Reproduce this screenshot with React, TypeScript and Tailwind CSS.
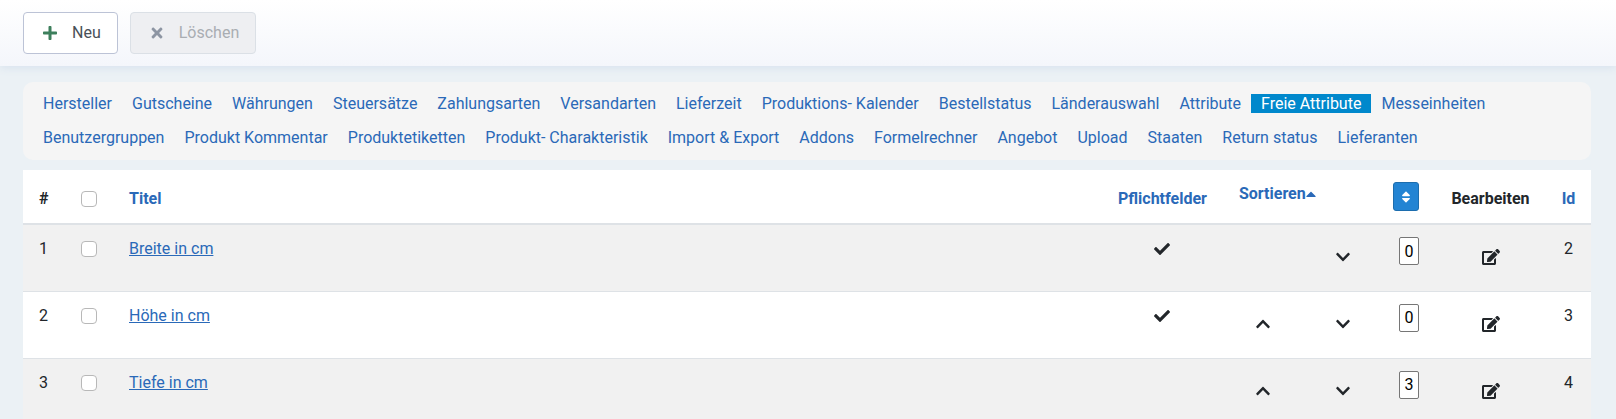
import { FaCaretUp, FaCheck, FaChevronDown, FaChevronUp, FaEdit, FaPlus, FaSort, FaTimes } from 'react-icons/fa'

type Attribute = {
  id: number
  title: string
  required: boolean
  ordering: number
}

const menu = [
  'Hersteller',
  'Gutscheine',
  'Währungen',
  'Steuersätze',
  'Zahlungsarten',
  'Versandarten',
  'Lieferzeit',
  'Produktions- Kalender',
  'Bestellstatus',
  'Länderauswahl',
  'Attribute',
  'Freie Attribute',
  'Messeinheiten',
  'Benutzergruppen',
  'Produkt Kommentar',
  'Produktetiketten',
  'Produkt- Charakteristik',
  'Import & Export',
  'Addons',
  'Formelrechner',
  'Angebot',
  'Upload',
  'Staaten',
  'Return status',
  'Lieferanten',
]

const active = 'Freie Attribute'

const attributes: Attribute[] = [
  { id: 2, title: 'Breite in cm', required: true, ordering: 0 },
  { id: 3, title: 'Höhe in cm', required: true, ordering: 0 },
  { id: 4, title: 'Tiefe in cm', required: false, ordering: 3 },
]

const checkbox = 'block size-4 appearance-none rounded border border-[#b8b8b8] bg-white checked:bg-[#2384d3]'

function Toolbar() {
  return (
    <header className="flex gap-3 bg-linear-to-b from-white to-[#f4f6fb] px-[23px] py-3 shadow-[0_2px_8px_#d8e2ee]">
      <button className="flex h-[42px] items-center rounded border border-[#bcc3d6] bg-white px-4 text-[#495057]">
        <FaPlus className="mr-3 w-5 text-[#3d7f5c]" />
        Neu
      </button>
      <button
        disabled
        className="flex h-[42px] items-center rounded border border-[#dbe0e6] bg-[#eeeff2] px-4 text-[#a9adb2]"
      >
        <FaTimes className="mr-3 w-5 text-[#8d95a3]" />
        Löschen
      </button>
    </header>
  )
}

function Menu() {
  return (
    <nav className="rounded-[10px] bg-[#f5f5f5] p-[5px]">
      <ul className="flex flex-wrap px-[5px]">
        {menu.map(item => (
          <li key={item} className="leading-[34px]">
            <a
              href="#"
              className={item === active ? 'bg-[#0088cc] px-[10px] text-white' : 'px-[10px] text-[#2a69b8]'}
            >
              {item}
            </a>
          </li>
        ))}
      </ul>
    </nav>
  )
}

function AttributeTable() {
  return (
    <table className="mt-[10px] w-full table-fixed border-collapse bg-white text-left">
      <colgroup>
        <col className="w-[42px]" />
        <col className="w-12" />
        <col />
        <col className="w-[121px]" />
        <col className="w-20" />
        <col className="w-20" />
        <col className="w-[52px]" />
        <col className="w-[111px]" />
        <col className="w-[45px]" />
      </colgroup>
      <thead>
        <tr className="h-[54px] border-b-2 border-[#dee2e6] align-bottom">
          <th className="pb-3 pl-4">#</th>
          <th className="px-4 pb-4">
            <input type="checkbox" aria-label="Alle auswählen" className={checkbox} />
          </th>
          <th className="px-4 pb-3">
            <a href="#" className="text-[#2a69b8]">Titel</a>
          </th>
          <th className="pb-3 text-center">
            <a href="#" className="text-[#2a69b8]">Pflichtfelder</a>
          </th>
          <th colSpan={3} className="px-4 pb-3">
            <div className="flex items-start justify-between">
              <a href="#" className="flex items-center text-[#2a69b8]">
                Sortieren
                <FaCaretUp className="w-[10px]" />
              </a>
              <button
                aria-label="Reihenfolge speichern"
                className="flex h-[29px] w-[26px] items-center justify-center rounded-[3px] border border-[#1c6dae] bg-[#2384d3] text-white"
              >
                <FaSort className="size-[14px]" />
              </button>
            </div>
          </th>
          <th className="pb-3 text-center">Bearbeiten</th>
          <th className="pb-3 text-center">
            <a href="#" className="text-[#2a69b8]">Id</a>
          </th>
        </tr>
      </thead>
      <tbody>
        {attributes.map((row, i) => (
          <tr key={row.id} className="h-[67px] border-b border-[#dee2e6] align-top odd:bg-[#f1f1f1]">
            <td className="py-3 pl-4">{i + 1}</td>
            <td className="p-4">
              <input type="checkbox" aria-label={row.title} className={checkbox} />
            </td>
            <td className="px-4 py-3">
              <a href="#" className="text-[#2a69b8] underline">{row.title}</a>
            </td>
            <td className="py-4">
              {row.required && <FaCheck className="mx-auto" />}
            </td>
            <td className="py-6">
              {i > 0 && (
                <button aria-label="Nach oben" className="mx-auto block">
                  <FaChevronUp className="size-4" />
                </button>
              )}
            </td>
            <td className="py-6">
              <button aria-label="Nach unten" className="mx-auto block">
                <FaChevronDown className="size-4" />
              </button>
            </td>
            <td className="px-4 py-3">
              <input
                type="text"
                aria-label={`Reihenfolge ${row.title}`}
                defaultValue={row.ordering}
                className="block h-7 w-5 rounded-[2px] border border-[#767676] bg-white text-center text-black"
              />
            </td>
            <td className="py-6">
              <a href="#" aria-label={`${row.title} bearbeiten`} className="mx-auto block w-[18px]">
                <FaEdit className="h-4 w-[18px]" />
              </a>
            </td>
            <td className="py-3 text-center">{row.id}</td>
          </tr>
        ))}
      </tbody>
    </table>
  )
}

export default function App() {
  return (
    <div className="h-screen overflow-hidden bg-[#ebf1f5] font-[Roboto,sans-serif] text-base text-[#22262a]">
      <Toolbar />
      <main className="pt-4 pr-[25px] pl-[23px]">
        <Menu />
        <AttributeTable />
      </main>
    </div>
  )
}
